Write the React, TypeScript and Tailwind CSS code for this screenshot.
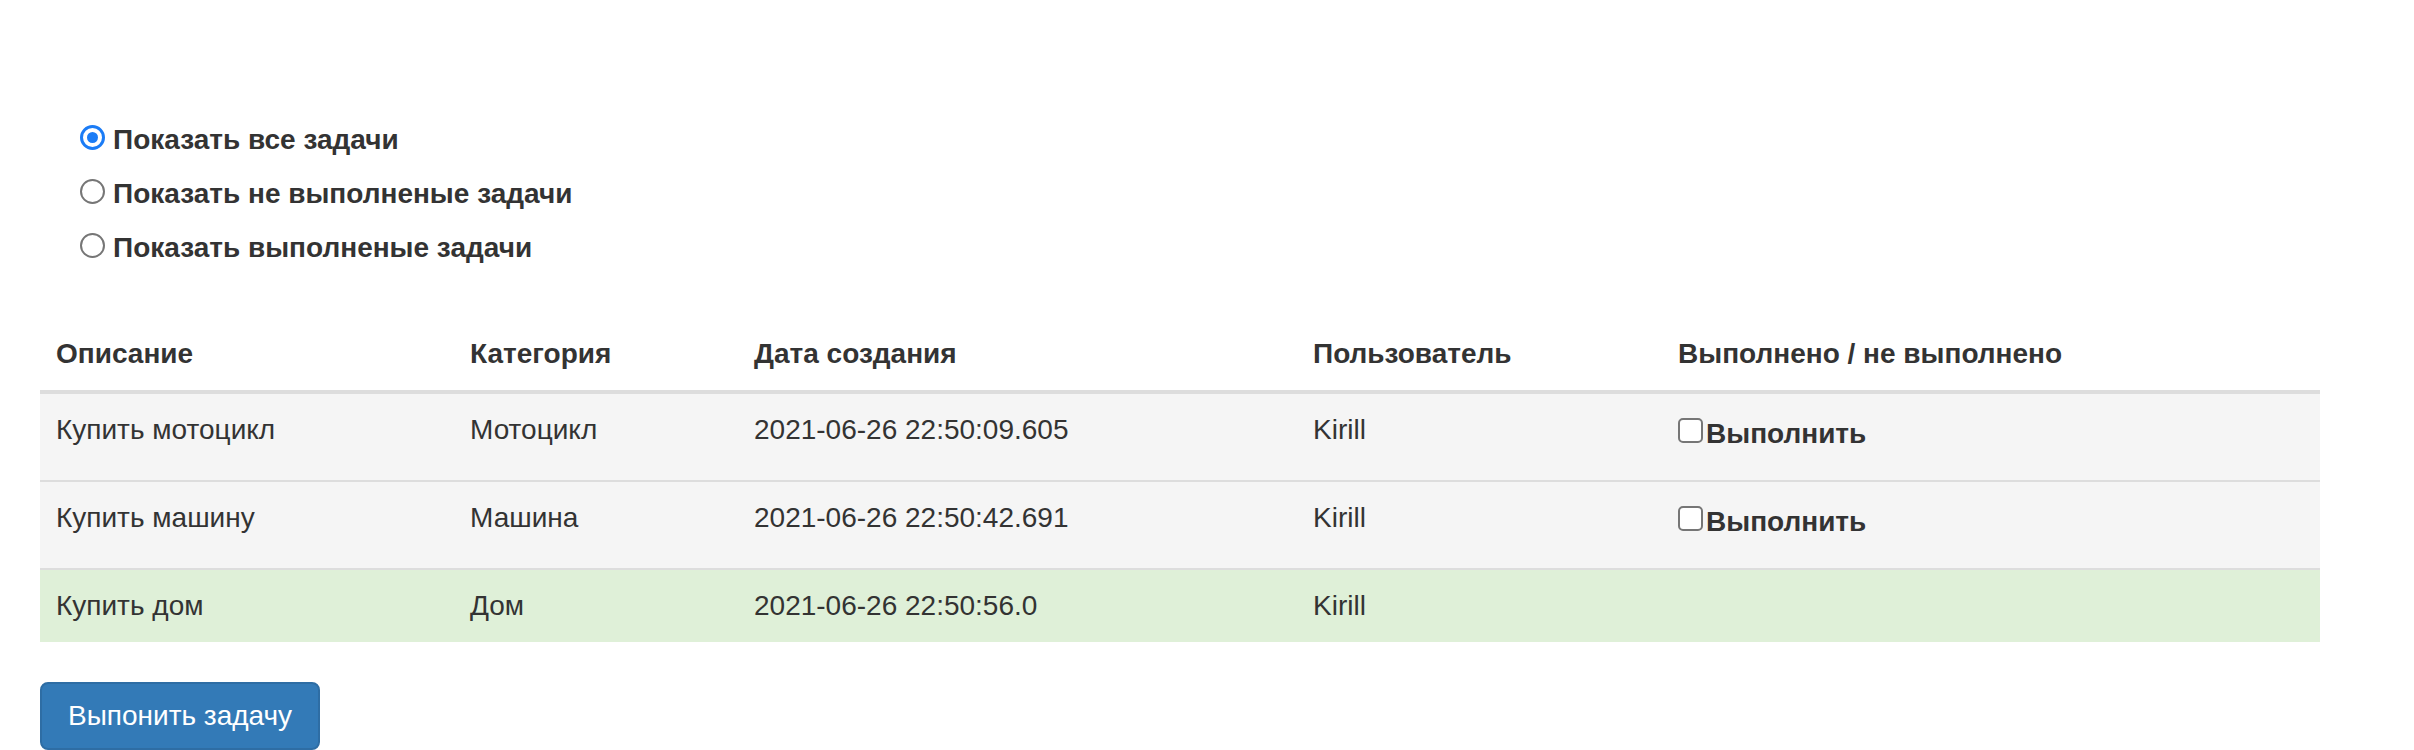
const rows = [
  { desc: 'Купить мотоцикл', cat: 'Мотоцикл', date: '2021-06-26 22:50:09.605', user: 'Kirill', done: false },
  { desc: 'Купить машину', cat: 'Машина', date: '2021-06-26 22:50:42.691', user: 'Kirill', done: false },
  { desc: 'Купить дом', cat: 'Дом', date: '2021-06-26 22:50:56.0', user: 'Kirill', done: true },
];

function Radio({ label, checked = false }: { label: string; checked?: boolean }) {
  return (
    <label className="flex items-start h-10 leading-10 font-bold">
      {checked ? (
        <span className="mt-[5px] mr-[8px] w-[25px] h-[25px] rounded-full border-[3px] border-[#1b7cf6] bg-white flex items-center justify-center">
          <span className="w-[11px] h-[11px] rounded-full bg-[#1b7cf6]" />
        </span>
      ) : (
        <span className="mt-[5px] mr-[8px] w-[25px] h-[25px] rounded-full border-2 border-[#767676] bg-white" />
      )}
      {label}
    </label>
  );
}

function Checkbox({ label }: { label: string }) {
  return (
    <label className="flex items-start pt-1 mb-[10px] leading-10 font-bold">
      <span className="mt-1 mr-[3px] w-[25px] h-[25px] rounded-[5px] border-2 border-[#767676] bg-white" />
      {label}
    </label>
  );
}

export default function App() {
  return (
    <div className="min-h-screen bg-white px-10 text-[28px] text-[#333] font-['Liberation_Sans',Arial,sans-serif]">
      {/* Filter */}
      <div className="ml-10 pt-[120px] flex flex-col gap-[14px]">
        <Radio label="Показать все задачи" checked />
        <Radio label="Показать не выполненые задачи" />
        <Radio label="Показать выполненые задачи" />
      </div>

      {/* Tasks table */}
      <table className="mt-[50px] w-[2280px] table-fixed border-collapse">
        <colgroup>
          <col className="w-[414px]" />
          <col className="w-[284px]" />
          <col className="w-[559px]" />
          <col className="w-[365px]" />
          <col className="w-[658px]" />
        </colgroup>
        <thead>
          <tr>
            {['Описание', 'Категория', 'Дата создания', 'Пользователь', 'Выполнено / не выполнено'].map(h => (
              <th key={h} className="p-4 text-left align-bottom font-bold leading-10 border-b-4 border-[#ddd]">
                {h}
              </th>
            ))}
          </tr>
        </thead>
        <tbody>
          {rows.map(r => (
            <tr key={r.desc} className={r.done ? 'bg-[#dff0d8]' : 'bg-[#f5f5f5]'}>
              <td className="p-4 align-top leading-10 border-t-2 border-[#ddd]">{r.desc}</td>
              <td className="p-4 align-top leading-10 border-t-2 border-[#ddd]">{r.cat}</td>
              <td className="p-4 align-top leading-10 border-t-2 border-[#ddd]">{r.date}</td>
              <td className="p-4 align-top leading-10 border-t-2 border-[#ddd]">{r.user}</td>
              <td className="p-4 align-top leading-10 border-t-2 border-[#ddd]">
                {!r.done && <Checkbox label="Выполнить" />}
              </td>
            </tr>
          ))}
        </tbody>
      </table>

      <button className="mt-10 h-[68px] px-[26px] leading-10 text-white bg-[#337ab7] border-2 border-[#2e6da4] rounded-lg">
        Выпонить задачу
      </button>
    </div>
  );
}
